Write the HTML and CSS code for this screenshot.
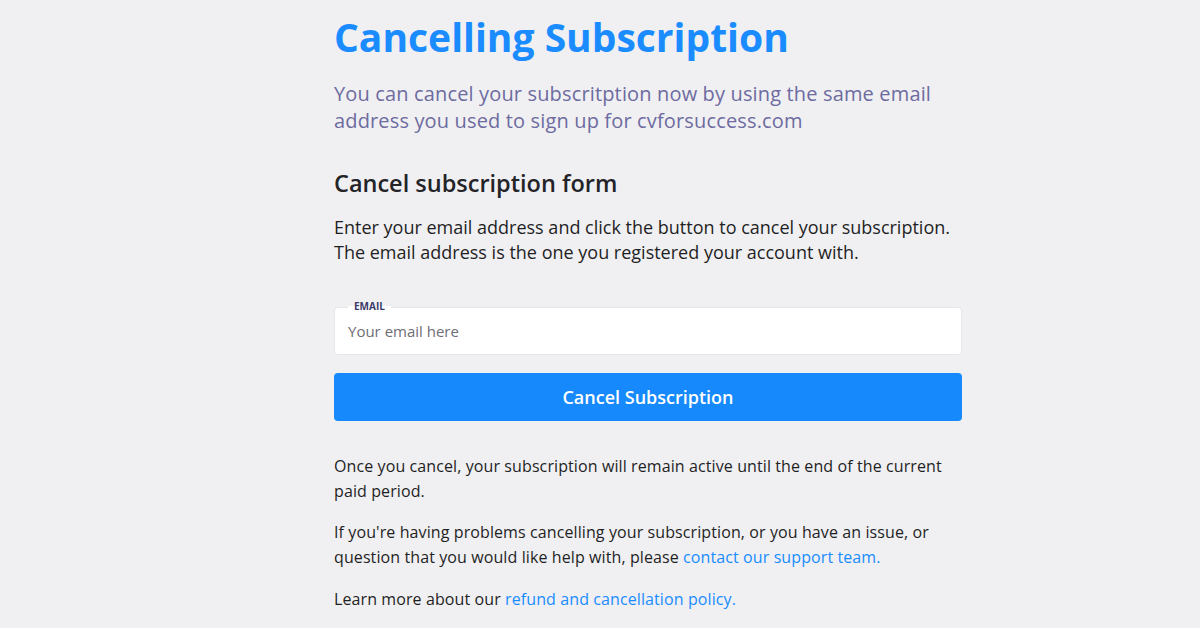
FILE: index.html
```html
<!DOCTYPE html>
<html lang="en">
<head>
<meta charset="utf-8">
<title>Cancelling Subscription</title>
<link rel="stylesheet" href="styles.css">
</head>
<body>
<main class="page">
  <h1 class="title">Cancelling Subscription</h1>
  <p class="lead">You can cancel your subscritption now by using the same email address you used to sign up for cvforsuccess.com</p>
  <h2 class="form-title">Cancel subscription form</h2>
  <p class="intro">Enter your email address and click the button to cancel your subscription. The email address is the one you registered your account with.</p>
  <form class="form">
    <label class="field">
      <span class="field-label">EMAIL</span>
      <input class="field-input" type="email" placeholder="Your email here">
    </label>
    <button class="btn" type="button">Cancel Subscription</button>
  </form>
  <p class="note">Once you cancel, your subscription will remain active until the end of the current paid period.</p>
  <p class="note">If you're having problems cancelling your subscription, or you have an issue, or question that you would like help with, please <a href="#">contact our support team.</a></p>
  <p class="note">Learn more about our <a href="#">refund and cancellation policy.</a></p>
</main>
</body>
</html>
```
FILE: styles.css
```css
html, body {
  margin: 0;
  padding: 0;
  background: #f0f0f3;
}
body {
  font-family: "Open Sans", "Noto Sans", sans-serif;
  color: #1f1f24;
}
.page {
  width: 628px;
  margin: 0 auto 0 334px;
  padding-top: 10px;
}
.title {
  margin: 0;
  font-size: 39px;
  line-height: 54px;
  font-weight: 700;
  color: #1a8cff;
}
.lead {
  margin: 16px 0 0;
  font-size: 20px;
  line-height: 27px;
  color: #6d6b9f;
  width: 612px;
  letter-spacing: 0.15px;
}
.form-title {
  margin: 34px 0 0;
  font-size: 23.5px;
  line-height: 30px;
  font-weight: 600;
  color: #232328;
}
.intro {
  margin: 17px 0 0;
  font-size: 18px;
  line-height: 25px;
}
.form {
  margin-top: 42px;
  display: flex;
  flex-direction: column;
  gap: 18px;
}
.field {
  position: relative;
  display: block;
}
.field-label {
  position: absolute;
  left: 14px;
  top: -7px;
  padding: 0 6px;
  font-size: 10px;
  font-weight: 700;
  line-height: 12px;
  color: #3b3a6b;
  background: linear-gradient(#f0f0f3 50%, #fff 50%);
}
.field-input {
  box-sizing: border-box;
  width: 100%;
  height: 48px;
  border: 1px solid #e6e6ea;
  border-radius: 4px;
  background: #fff;
  padding: 0 13px;
  font-family: inherit;
  font-size: 15px;
  color: #222;
  outline: none;
}
.field-input::placeholder {
  color: #6e6e76;
}
.btn {
  height: 48px;
  border: 0;
  border-radius: 4px;
  background: #1689fc;
  color: #fff;
  font-family: inherit;
  font-size: 18px;
  font-weight: 600;
  cursor: pointer;
}
.note {
  margin: 0;
  font-size: 16px;
  line-height: 25px;
  width: 620px;
  letter-spacing: 0.1px;
}
.form + .note {
  margin-top: 33px;
}
.note + .note {
  margin-top: 16px;
}
.note:last-child {
  margin-top: 17px;
}
.note a {
  color: #1a8cff;
  text-decoration: none;
}
```
